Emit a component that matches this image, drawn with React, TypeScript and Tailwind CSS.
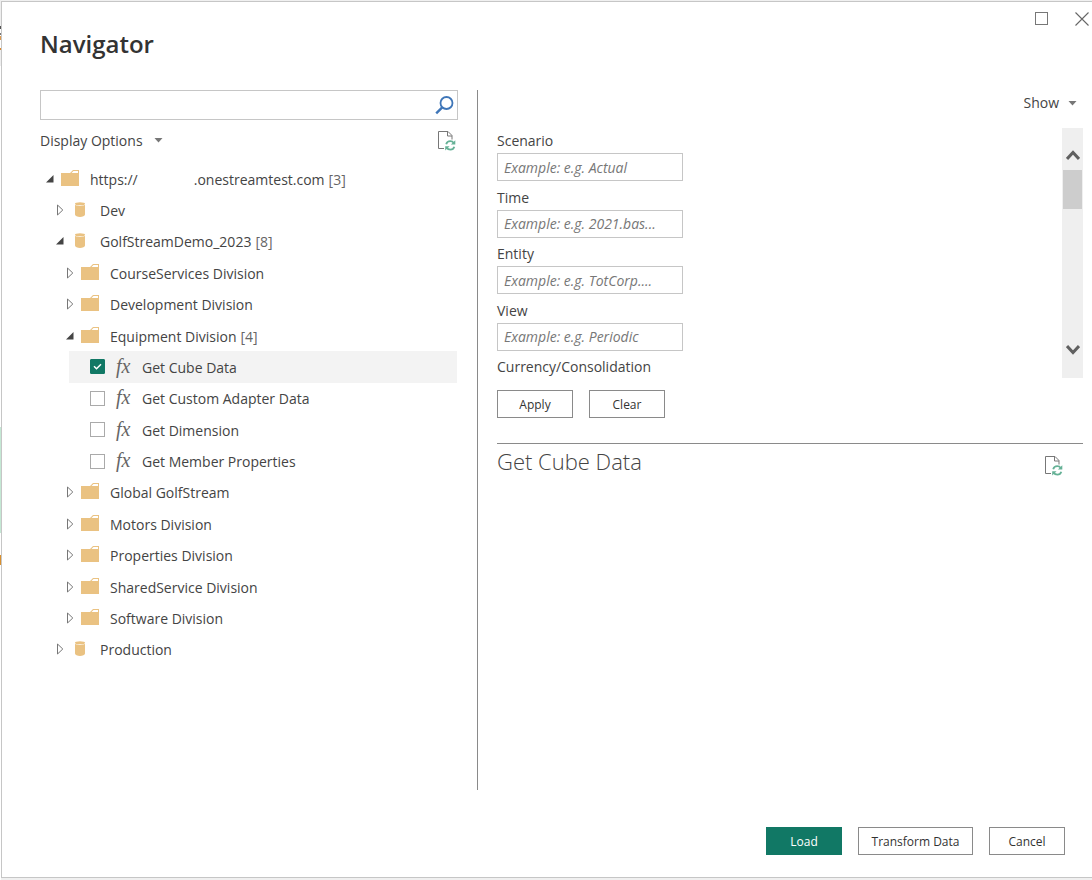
import { useState } from 'react';

type NodeKind = 'folder' | 'database' | 'function';

interface TreeNode {
  id: string;
  label: string;
  kind: NodeKind;
  level: number;
  expanded?: boolean;
  count?: number;
}

const TREE: TreeNode[] = [
  { id: 'root', label: 'https://', kind: 'folder', level: 0, expanded: true, count: 3 },
  { id: 'dev', label: 'Dev', kind: 'database', level: 1 },
  { id: 'demo', label: 'GolfStreamDemo_2023', kind: 'database', level: 1, expanded: true, count: 8 },
  { id: 'course', label: 'CourseServices Division', kind: 'folder', level: 2 },
  { id: 'development', label: 'Development Division', kind: 'folder', level: 2 },
  { id: 'equipment', label: 'Equipment Division', kind: 'folder', level: 2, expanded: true, count: 4 },
  { id: 'cube', label: 'Get Cube Data', kind: 'function', level: 3 },
  { id: 'adapter', label: 'Get Custom Adapter Data', kind: 'function', level: 3 },
  { id: 'dimension', label: 'Get Dimension', kind: 'function', level: 3 },
  { id: 'member', label: 'Get Member Properties', kind: 'function', level: 3 },
  { id: 'global', label: 'Global GolfStream', kind: 'folder', level: 2 },
  { id: 'motors', label: 'Motors Division', kind: 'folder', level: 2 },
  { id: 'properties', label: 'Properties Division', kind: 'folder', level: 2 },
  { id: 'shared', label: 'SharedService Division', kind: 'folder', level: 2 },
  { id: 'software', label: 'Software Division', kind: 'folder', level: 2 },
  { id: 'production', label: 'Production', kind: 'database', level: 1 },
];

const FIELDS = [
  { id: 'scenario', label: 'Scenario', placeholder: 'Example: e.g. Actual' },
  { id: 'time', label: 'Time', placeholder: 'Example: e.g. 2021.bas...' },
  { id: 'entity', label: 'Entity', placeholder: 'Example: e.g. TotCorp....' },
  { id: 'view', label: 'View', placeholder: 'Example: e.g. Periodic' },
];

const INDENT = ['pl-[6px]', 'pl-[16px]', 'pl-[26px]'];

const BUTTON = 'h-7 border border-[#8a8a8a] bg-white pt-px text-xs text-[#333333] hover:bg-gray-50';

function FolderIcon() {
  return (
    <svg width="18" height="16" viewBox="0 0 18 16">
      <path d="M0 3h9l3-3h6v16H0z" fill="#eac282" />
      <path d="M10.500 3 12.500 1H17v2z" fill="#fff" />
    </svg>
  );
}

function DatabaseIcon() {
  return (
    <svg width="10" height="15" viewBox="0 0 10 15">
      <path d="M0 2.800c1.200 1.500 8.800 1.500 10 0V12.500c0 3.200-10 3.200-10 0z" fill="#eac282" />
      <ellipse cx="5" cy="1.700" rx="5" ry="1.500" fill="#eac282" />
    </svg>
  );
}

function RefreshPageIcon() {
  return (
    <svg width="18" height="20" viewBox="0 0 18 20" fill="none">
      <path d="M6 17.500H.5V.5H10L14 4.500v4M9.500.5V5H14" stroke="#777" />
      <path d="M8.200 13.200c.6-2 2-3 4-3 1.700 0 2.800.6 3.600 1.900M16.300 15.700c-.6 1.900-2 2.900-3.900 2.900-1.700 0-2.900-.6-3.700-1.900" stroke="#65b196" strokeWidth="1.800" />
      <path d="M17.300 9.300v4.200h-4.400zM7.200 19.500v-4.300h4.400z" fill="#65b196" />
    </svg>
  );
}

function Caret() {
  return (
    <svg width="9" height="5" viewBox="0 0 9 5">
      <path d="M.5 0h8l-4 4.500z" fill="#777" />
    </svg>
  );
}

function Expander({ node }: { node: TreeNode }) {
  return (
    <button type="button" aria-label={node.label} aria-expanded={!!node.expanded} className="flex w-[15px] shrink-0 items-center">
      {node.expanded ? (
        <svg width="8" height="8" viewBox="0 0 8 8">
          <path d="M7.500 0v7.500H0z" fill="#444" />
        </svg>
      ) : (
        <svg width="8" height="12" viewBox="0 0 8 12">
          <path d="M1.500 1v10l5.300-5z" fill="#fff" stroke="#777" />
        </svg>
      )}
    </button>
  );
}

interface FunctionRowProps {
  node: TreeNode;
  checked: boolean;
  onToggle: () => void;
}

function FunctionRow({ node, checked, onToggle }: FunctionRowProps) {
  return (
    <li className={`mr-px ml-[29px] flex items-center pl-[21px] ${checked ? 'bg-[#f3f3f3]' : ''}`}>
      <span className="relative flex">
        <input
          id={node.id}
          type="checkbox"
          checked={checked}
          onChange={onToggle}
          className="size-[15px] appearance-none border border-[#aaaaaa] bg-white checked:rounded-[1px] checked:border-[#117865] checked:bg-[#117865]"
        />
        {checked && (
          <svg width="15" height="15" viewBox="0 0 15 15" className="pointer-events-none absolute inset-0">
            <path d="m4 7.300 2.500 2.500L11 5.300" fill="none" stroke="#fff" strokeWidth="1.500" />
          </svg>
        )}
      </span>
      <label htmlFor={node.id} className="flex items-center">
        <span className="w-[37px] pb-[2px] pl-[11px] font-['Liberation_Serif',serif] text-xl leading-6 text-[#666666] italic">
          fx
        </span>
        <span className="pt-[2px]">{node.label}</span>
      </label>
    </li>
  );
}

function TreeRow({ node }: { node: TreeNode }) {
  return (
    <li className={`flex items-center ${INDENT[node.level]}`}>
      <Expander node={node} />
      <span className="mr-[11px] flex w-[18px] shrink-0 justify-center pb-[2px]">
        {node.kind === 'folder' ? <FolderIcon /> : <DatabaseIcon />}
      </span>
      <span className="flex pt-[2px]">
        {node.label}
        {node.level === 0 && <span className="ml-14">.onestreamtest.com</span>}
        {node.count && <span className="ml-1 text-[#666666]">[{node.count}]</span>}
      </span>
    </li>
  );
}

function ScrollBar() {
  return (
    <div className="flex w-[21px] flex-col items-center bg-[#efefef]">
      <button type="button" aria-label="Scroll up" className="flex h-[42px] items-center pt-3">
        <svg width="14" height="12" viewBox="0 0 14 12">
          <path d="m1 10 6-6.500L13 10" fill="none" stroke="#606060" strokeWidth="3" />
        </svg>
      </button>
      <div className="h-[39px] w-[19px] bg-[#cdcdcd]" />
      <button type="button" aria-label="Scroll down" className="mt-auto flex h-[42px] items-center pb-[14px]">
        <svg width="14" height="12" viewBox="0 0 14 12">
          <path d="m1 2 6 6.500L13 2" fill="none" stroke="#606060" strokeWidth="3" />
        </svg>
      </button>
    </div>
  );
}

export default function App() {
  const [selected, setSelected] = useState<string[]>(['cube']);

  const toggle = (id: string) => {
    setSelected((prev) => (prev.includes(id) ? prev.filter((x) => x !== id) : [...prev, id]));
  };

  return (
    <div className="flex min-h-screen bg-[#f0f0f0] font-['Open_Sans','Noto_Sans',sans-serif] text-sm text-[#444444]">
      {/* sliver of the window behind the dialog */}
      <div className="flex w-px flex-col bg-white">
        <div className="h-[26px] bg-[#eeeeee]" />
        <div className="h-[3px] bg-[#555555]" />
        <div className="mt-1 h-[2px] bg-[#777777]" />
        <div className="mt-px h-1 bg-[#dd9a50]" />
        <div className="mt-2 h-[2px] bg-[#dd8a30]" />
        <div className="h-4 bg-[#eeeeee]" />
        <div className="mt-[361px] h-[106px] bg-[#c4e8d4]" />
        <div className="mt-[22px] h-[10px] bg-[#d9902f]" />
      </div>

      <main className="mt-px mb-[2px] flex flex-1 flex-col border border-r-0 border-[#c6c6c6] bg-white">
        <header className="flex h-[88px] justify-between pr-[3px] pl-[38px]">
          <h1 className="pt-[26px] text-2xl leading-8 font-semibold text-[#333333]">Navigator</h1>
          <div className="flex items-start gap-[26px] pt-[10px]">
            <button type="button" aria-label="Maximize">
              <svg width="14" height="14" viewBox="0 0 14 14">
                <rect x=".5" y=".5" width="12" height="12" fill="none" stroke="#777" />
              </svg>
            </button>
            <button type="button" aria-label="Close">
              <svg width="14" height="14" viewBox="0 0 14 14">
                <path d="m.5.5 13 13m0-13-13 13" stroke="#666" strokeWidth="1.100" />
              </svg>
            </button>
          </div>
        </header>

        <div className="flex min-h-[700px] flex-1 pr-[9px] pl-[38px]">
          <section className="w-[418px] shrink-0">
            <div className="flex h-[30px] items-center border border-[#c6c6c6] pr-[3px]">
              <input type="text" aria-label="Search" className="h-full min-w-0 flex-1 px-2 outline-none" />
              <button type="button" aria-label="Start search">
                <svg width="19" height="20" viewBox="0 0 19 20" fill="none" stroke="#3f76b8">
                  <circle cx="11.500" cy="8" r="6" strokeWidth="1.800" />
                  <path d="m7.200 12.300-6 6" strokeWidth="2.400" />
                </svg>
              </button>
            </div>

            <div className="flex h-[41px] items-center justify-between pr-[2px]">
              <button type="button" className="flex items-center gap-[11px]">
                Display Options
                <Caret />
              </button>
              <button type="button" aria-label="Refresh">
                <RefreshPageIcon />
              </button>
            </div>

            <ul className="mt-[2px] grid h-[502px] auto-rows-fr">
              {TREE.map((node) =>
                node.kind === 'function' ? (
                  <FunctionRow
                    key={node.id}
                    node={node}
                    checked={selected.includes(node.id)}
                    onToggle={() => toggle(node.id)}
                  />
                ) : (
                  <TreeRow key={node.id} node={node} />
                ),
              )}
            </ul>
          </section>

          <section className="ml-[19px] flex-1 border-l border-[#8a8a8a] pl-[19px]">
            <div className="flex h-[38px] items-start justify-end pr-[6px]">
              <button type="button" className="flex h-[26px] items-center gap-[9px]">
                Show
                <Caret />
              </button>
            </div>

            <div className="flex h-[250px] justify-between">
              <div className="pt-[3px]">
                <div className="grid h-[226px] auto-rows-fr">
                  {FIELDS.map((field) => (
                    <div key={field.id}>
                      <label htmlFor={field.id} className="block h-[22px] leading-5">
                        {field.label}
                      </label>
                      <input
                        id={field.id}
                        type="text"
                        placeholder={field.placeholder}
                        className="block h-7 w-[186px] border border-[#c6c6c6] px-[6px] outline-none placeholder:text-[#777777] placeholder:italic"
                      />
                    </div>
                  ))}
                </div>
                <p className="leading-5">Currency/Consolidation</p>
              </div>
              <ScrollBar />
            </div>

            <div className="mt-3 flex gap-4">
              <button type="button" className={`${BUTTON} w-[76px]`}>
                Apply
              </button>
              <button type="button" className={`${BUTTON} w-[76px]`}>
                Clear
              </button>
            </div>

            <div className="mt-[25px] flex items-start justify-between border-t border-[#8a8a8a] pr-5">
              <h2 className="pt-px text-[22px] leading-8 font-light">Get Cube Data</h2>
              <button type="button" aria-label="Refresh preview" className="pt-3">
                <RefreshPageIcon />
              </button>
            </div>
          </section>
        </div>

        <footer className="flex justify-end gap-4 pt-[37px] pr-[27px] pb-[22px]">
          <button type="button" className="h-7 w-[76px] bg-[#117865] pt-px text-xs text-white hover:bg-[#0e6a59]">
            Load
          </button>
          <button type="button" className={`${BUTTON} w-[115px]`}>
            Transform Data
          </button>
          <button type="button" className={`${BUTTON} w-[76px]`}>
            Cancel
          </button>
        </footer>
      </main>
    </div>
  );
}
